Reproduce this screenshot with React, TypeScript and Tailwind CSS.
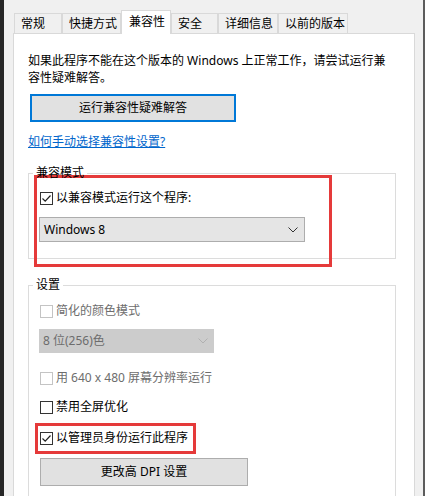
import React from 'react';

const FONT = { fontFamily: '"Noto Sans", "Noto Sans CJK SC", sans-serif' };

const tabs = [
  { label: '常规', w: 'w-[48px]' },
  { label: '快捷方式', w: 'w-[59px]' },
  { label: '兼容性', w: 'w-[50px]', active: true },
  { label: '安全', w: 'w-[47px]' },
  { label: '详细信息', w: 'w-[60px]' },
  { label: '以前的版本', w: 'w-[70px]' },
];

const Check: React.FC<{ checked?: boolean; disabled?: boolean }> = ({ checked, disabled }) => (
  <span
    className={`flex h-[13px] w-[13px] shrink-0 items-center justify-center border bg-white ${
      disabled ? 'border-[#c4c4c4]' : 'border-[#333333]'
    }`}
  >
    {checked && (
      <svg width="11" height="11" viewBox="0 0 11 11">
        <path d="M1.5 5.5 L4.2 8.2 L9.5 2.5" fill="none" stroke="#222" strokeWidth="1.2" />
      </svg>
    )}
  </span>
);

const Row: React.FC<{ label: string; checked?: boolean; disabled?: boolean; className?: string }> = ({
  label,
  checked,
  disabled,
  className = '',
}) => (
  <div className={`flex h-[16px] items-center gap-[3px] ${className}`}>
    <Check checked={checked} disabled={disabled} />
    <span className={`whitespace-nowrap text-[12px] leading-[16px] ${disabled ? 'text-[#6d6d6d]' : 'text-black'}`}>
      {label}
    </span>
  </div>
);

const Chevron: React.FC<{ color: string }> = ({ color }) => (
  <svg width="10" height="6" viewBox="0 0 10 6">
    <path d="M0.5 0.5 L5 5 L9.5 0.5" fill="none" stroke={color} strokeWidth="1" />
  </svg>
);

export default function App() {
  return (
    <div className="flex h-[496px] w-[425px] overflow-hidden bg-[#f0f0f0]" style={FONT}>
      <div className="w-[4px] shrink-0 bg-[#262626]" />

      <div className="flex flex-1 flex-col pl-[9px] pr-[8px] pt-[10px]">
        {/* tabs */}
        <div className="flex h-[23px] items-end pl-px">
          {tabs.map((t) =>
            t.active ? (
              <div
                key={t.label}
                className={`${t.w} relative z-10 -mb-px h-[24px] border-x border-t border-[#d9d9d9] bg-white pl-[7px] text-[12px] leading-[22px] text-black`}
              >
                {t.label}
              </div>
            ) : (
              <div
                key={t.label}
                className={`${t.w} h-[20px] border-x border-t border-[#d9d9d9] bg-[#f0f0f0] pl-[6px] text-[12px] leading-[20px] text-black`}
              >
                {t.label}
              </div>
            )
          )}
        </div>

        {/* panel */}
        <div className="flex-1 border border-[#d9d9d9] bg-white pl-[14px] pt-[18px]">
          <p className="whitespace-nowrap text-[12px] leading-[17px] text-black">
            如果此程序不能在这个版本的 Windows 上正常工作，请尝试运行兼
            <br />
            容性疑难解答。
          </p>

          <button className="ml-[2px] mt-[8px] flex h-[28px] w-[206px] items-center justify-center border-2 border-[#0078d7] bg-[#e1e1e1] text-[12px] text-black">
            运行兼容性疑难解答
          </button>

          <div className="mt-[11px] text-[12px] leading-[17px] text-[#0066cc] underline">如何手动选择兼容性设置?</div>

          <fieldset className="mt-[16px] w-[368px] border border-[#dcdcdc]">
            <legend className="ml-[4px] px-[3px] text-[12px] leading-[14px] text-black">兼容模式</legend>
            <div className="-mb-[9px] -mt-[5px] ml-[5px] w-[298px] border-[3px] border-[#e53a3a] pb-[22px] pl-[2px] pt-[12px]">
              <Row label="以兼容模式运行这个程序:" checked className="ml-px" />
              <div className="mt-[11px] flex h-[25px] w-[266px] items-center justify-between border border-[#adadad] bg-[#e5e5e5] pl-[4px] pr-[6px]">
                <span className="text-[12px] text-black">Windows 8</span>
                <Chevron color="#333" />
              </div>
            </div>
          </fieldset>

          <fieldset className="mt-[19px] h-[260px] w-[368px] border border-[#dcdcdc]">
            <legend className="ml-[4px] px-[3px] text-[12px] leading-[14px] text-black">设置</legend>
            <div className="flex flex-col items-start pt-[11px]">
              <Row label="简化的颜色模式" disabled className="ml-[11px]" />
              <div className="ml-[10px] mt-[10px] flex h-[24px] w-[175px] items-center justify-between bg-[#cccccc] pl-[4px] pr-[6px]">
                <span className="text-[12px] text-[#6d6d6d]">8 位(256)色</span>
                <Chevron color="#b0b0b0" />
              </div>
              <Row label="用 640 x 480 屏幕分辨率运行" disabled className="ml-[11px] mt-[17px]" />
              <Row label="禁用全屏优化" className="ml-[11px] mt-[13px]" />
              <div className="ml-[6px] mt-[8px] w-[161px] border-[3px] border-[#e53a3a] pb-[5px] pl-[2px] pt-[4px]">
                <Row label="以管理员身份运行此程序" checked />
              </div>
              <button className="ml-[11px] mt-[4px] flex h-[28px] w-[208px] items-center justify-center border border-[#adadad] bg-[#e1e1e1] text-[12px] text-black">
                更改高 DPI 设置
              </button>
            </div>
          </fieldset>
        </div>
      </div>

      <div className="w-[2px] shrink-0 bg-[#5c5c5c]" />
    </div>
  );
}
